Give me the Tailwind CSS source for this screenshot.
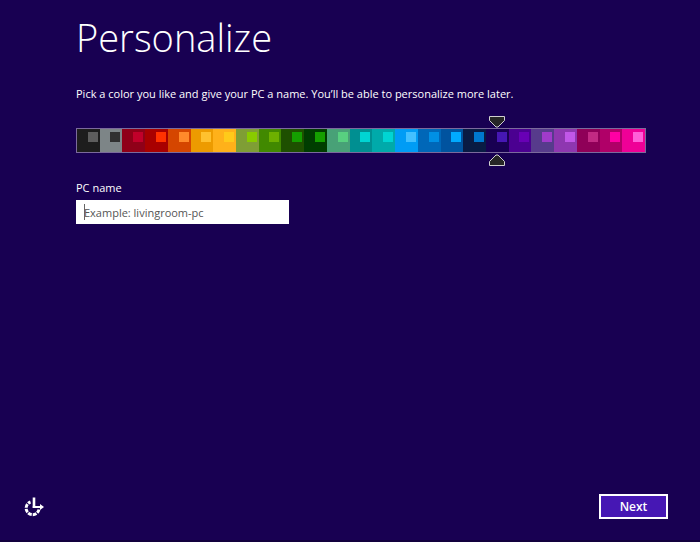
<!DOCTYPE html>
<html lang="en">
  <head>
    <meta charset="UTF-8" />
    <meta name="viewport" content="width=device-width, initial-scale=1.0" />
    <script src="https://cdn.jsdelivr.net/npm/@tailwindcss/browser@4"></script>
    <title>Personalize</title>
  </head>
  <body class="bg-[#180052] text-white font-['Segoe_UI','Open_Sans',sans-serif]">
    <form id="setup-form" class="min-h-screen flex flex-col border-b-2 border-[#12003e]">
      <main class="grow pl-[76px] pr-[54px] pt-3">
        <h1 class="text-[38px] leading-[50px] font-light">Personalize</h1>
        <p class="mt-[22px] text-[11px] leading-5">
          Pick a color you like and give your PC a name. You’ll be able to personalize more later.
        </p>

        <fieldset class="mt-6" aria-label="Color">
          <div id="colors" class="flex h-[25px] border border-[#7b6a9c]"></div>
        </fieldset>

        <div class="mt-[25px]">
          <label for="pc-name" class="block text-[11px] leading-5">PC name</label>
          <div class="relative mt-0.5 w-[213px]">
            <input
              type="text"
              id="pc-name"
              name="pc-name"
              placeholder="Example: livingroom-pc"
              class="peer block w-full h-6 px-2 bg-white text-[11px] text-black placeholder:text-[#555555] outline-none"
            />
            <!-- resting caret, replaced by the real one on focus -->
            <span class="absolute left-2 top-1 w-px h-4 bg-[#666666] peer-focus:hidden"></span>
          </div>
        </div>
      </main>

      <footer class="flex items-center justify-between pl-6 pr-8 pb-[21px]">
        <button type="button" aria-label="Ease of access">
          <svg class="size-5" viewBox="0 0 20 20" fill="none" stroke="white">
            <path
              d="M15 12.500A6.500 6.500 0 1 1 6.500 5"
              stroke-width="3"
              stroke-dasharray="3.8 1"
            />
            <path d="M10 .5v10.500" stroke-width="2.6" />
            <path d="M8.800 10h8" stroke-width="2" />
            <path d="M16 7l4 3-4 3z" fill="white" stroke="none" />
          </svg>
        </button>
        <button
          type="submit"
          class="w-[69px] h-[25px] border-2 border-white bg-[#4617b4] text-xs font-semibold"
        >
          Next
        </button>
      </footer>
    </form>

    <script>
      // name, background, accent
      const colors = [
        ["Black", "#1d1d1d", "#5d5d5d"],
        ["Gray", "#7d8587", "#303030"],
        ["Crimson", "#8f0018", "#c1002a"],
        ["Red", "#a80000", "#ff3200"],
        ["Rust", "#d54600", "#ff8a2b"],
        ["Orange", "#ed9b00", "#ffc12f"],
        ["Amber", "#ffb11a", "#ffca1a"],
        ["Olive", "#7f9e35", "#89cb00"],
        ["Grass", "#418900", "#6db000"],
        ["Forest", "#1e5000", "#159f00"],
        ["Dark green", "#003d00", "#159f00"],
        ["Sea green", "#48a177", "#58d080"],
        ["Dark teal", "#008f91", "#00d5d3"],
        ["Teal", "#00aaaa", "#00d5d3"],
        ["Sky blue", "#009cf5", "#43c0ff"],
        ["Blue", "#0067b8", "#0090e5"],
        ["Dark blue", "#00539f", "#00aaff"],
        ["Navy", "#091b44", "#0078cf"],
        ["Indigo", "#180052", "#4617b4"],
        ["Violet", "#4b0091", "#6800b5"],
        ["Lavender", "#573b8c", "#a03bcb"],
        ["Purple", "#8e37b0", "#c157e8"],
        ["Plum", "#8f0058", "#c22a83"],
        ["Magenta", "#b00068", "#ff00a4"],
        ["Pink", "#ef0097", "#ff60d8"],
      ];

      document.getElementById("colors").innerHTML = colors
        .map(
          ([name, bg, accent]) => `
            <label class="relative flex-1" style="background-color: ${bg}">
              <input type="radio" name="color" value="${name}" aria-label="${name}"
                class="peer sr-only" ${name === "Indigo" ? "checked" : ""} />
              <span class="block size-[10px] mt-[3px] ml-auto mr-[2px]" style="background-color: ${accent}"></span>
              <svg class="hidden peer-checked:block absolute left-1/2 -translate-x-1/2 -top-[13px] w-4 h-3"
                viewBox="0 0 16 12" fill="#262626" stroke="#d0d0d0">
                <path d="M.5.5h15v4l-6.500 6.500h-2l-6.500-6.500z" />
              </svg>
              <svg class="hidden peer-checked:block absolute left-1/2 -translate-x-1/2 -bottom-[14px] w-4 h-3"
                viewBox="0 0 16 12" fill="#262626" stroke="#d0d0d0">
                <path d="M.5 11.500h15v-4l-6.500-6.500h-2l-6.500 6.500z" />
              </svg>
            </label>`
        )
        .join("");

      document.getElementById("setup-form").addEventListener("submit", (event) => {
        event.preventDefault();
      });
    </script>
  </body>
</html>
